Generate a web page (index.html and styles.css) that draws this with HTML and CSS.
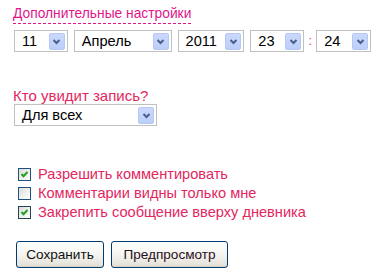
FILE: index.html
```html
<!DOCTYPE html>
<html lang="ru">
<head>
<meta charset="utf-8">
<link rel="stylesheet" href="styles.css">
</head>
<body>
<div class="page">
  <div class="heading-wrap"><span class="heading">Дополнительные настройки</span></div>

  <div class="date-row">
    <div class="select w-day"><span class="val">11</span><span class="arrow"><svg width="15" height="17" viewBox="0 0 15 17"><polyline points="4.5,7 7.5,10 10.5,7" fill="none" stroke="#4a5f8a" stroke-width="2"/></svg></span></div>
    <div class="select w-month"><span class="val">Апрель</span><span class="arrow"><svg width="15" height="17" viewBox="0 0 15 17"><polyline points="4.5,7 7.5,10 10.5,7" fill="none" stroke="#4a5f8a" stroke-width="2"/></svg></span></div>
    <div class="select w-year"><span class="val">2011</span><span class="arrow"><svg width="15" height="17" viewBox="0 0 15 17"><polyline points="4.5,7 7.5,10 10.5,7" fill="none" stroke="#4a5f8a" stroke-width="2"/></svg></span></div>
    <div class="select w-hour"><span class="val">23</span><span class="arrow"><svg width="15" height="17" viewBox="0 0 15 17"><polyline points="4.5,7 7.5,10 10.5,7" fill="none" stroke="#4a5f8a" stroke-width="2"/></svg></span></div>
    <span class="colon">:</span>
    <div class="select w-min"><span class="val">24</span><span class="arrow"><svg width="15" height="17" viewBox="0 0 15 17"><polyline points="4.5,7 7.5,10 10.5,7" fill="none" stroke="#4a5f8a" stroke-width="2"/></svg></span></div>
  </div>

  <div class="label-q">Кто увидит запись?</div>
  <div class="select w-who"><span class="val">Для всех</span><span class="arrow"><svg width="15" height="17" viewBox="0 0 15 17"><polyline points="4.5,7 7.5,10 10.5,7" fill="none" stroke="#4a5f8a" stroke-width="2"/></svg></span></div>

  <div class="checks">
    <div class="check-row"><span class="cb"><svg width="11" height="11" viewBox="0 0 11 11"><polyline points="2.5,5 4.5,7.2 8.5,3" fill="none" stroke="#21a121" stroke-width="2"/></svg></span><span class="cb-label">Разрешить комментировать</span></div>
    <div class="check-row"><span class="cb"></span><span class="cb-label">Комментарии видны только мне</span></div>
    <div class="check-row"><span class="cb cb-focus"><svg width="11" height="11" viewBox="0 0 11 11"><polyline points="2.5,5 4.5,7.2 8.5,3" fill="none" stroke="#21a121" stroke-width="2"/></svg></span><span class="cb-label">Закрепить сообщение вверху дневника</span></div>
  </div>

  <div class="buttons">
    <button class="btn btn-save">Сохранить</button>
    <button class="btn btn-preview">Предпросмотр</button>
  </div>
</div>
</body>
</html>
```

FILE: styles.css
```css
html, body {
  margin: 0;
  padding: 0;
  background: #ffffff;
}

.page {
  padding: 4px 0 0 13px;
  font-family: "Liberation Sans", Arial, sans-serif;
}

.heading-wrap {
  height: 19px;
}

.heading {
  display: inline-block;
  font-size: 13.8px;
  line-height: 16px;
  color: #e0168a;
  padding-bottom: 2px;
  background-image: linear-gradient(to right, #e0168a 60%, transparent 60%);
  background-size: 5px 1px;
  background-repeat: repeat-x;
  background-position: left bottom;
}

.date-row {
  display: flex;
  align-items: center;
  gap: 6px;
  margin-top: 7px;
  margin-left: 1px;
}

.select {
  box-sizing: border-box;
  height: 22px;
  border: 1px solid #c0c0c0;
  background: #ffffff;
  display: flex;
  align-items: center;
  font-size: 14.6px;
  color: #000;
}

.select .val {
  flex: 1;
  padding-left: 7px;
  line-height: 18px;
  white-space: nowrap;
}

.select .arrow {
  box-sizing: border-box;
  width: 16px;
  height: 17px;
  margin-right: 2px;
  background: linear-gradient(#cad9fd, #bccff9);
  border: 1px solid #b4c8f3;
  border-radius: 2px;
  display: flex;
  align-items: center;
  justify-content: center;
}

.select .arrow svg {
  display: block;
  margin: -1px;
}

.w-day { width: 54px; }
.w-month { width: 98px; }
.w-year { width: 67px; }
.w-hour { width: 54px; }
.w-min { width: 55px; }
.w-who { width: 143px; margin-left: 1px; }

.colon {
  width: 8px;
  margin: 0 -4px;
  text-align: center;
  color: #e0168a;
  font-size: 12px;
}

.label-q {
  margin-top: 36px;
  font-size: 15px;
  line-height: 16px;
  color: #e42660;
}

.checks {
  margin-top: 39px;
  padding-left: 5px;
}

.check-row {
  display: flex;
  align-items: center;
  height: 19px;
}

.cb {
  box-sizing: border-box;
  width: 13px;
  height: 13px;
  border: 1px solid #1c5180;
  background: linear-gradient(135deg, #dcdcd7 0%, #f2f2ef 60%, #ffffff 100%);
  margin-right: 7px;
  flex: none;
  position: relative;
}

.cb svg {
  display: block;
}

.cb-focus {
  outline: 1px dotted #333;
  outline-offset: -1px;
}

.cb-label {
  font-size: 14.6px;
  line-height: 19px;
  color: #e42660;
}

.buttons {
  display: flex;
  gap: 7px;
  margin-top: 19px;
  margin-left: 3px;
}

.btn {
  box-sizing: border-box;
  height: 27px;
  border: 1px solid #003c74;
  border-radius: 3px;
  background: linear-gradient(#ffffff 0%, #f4f4f0 50%, #e6e3da 90%, #d6d0c5 100%);
  font-family: "Liberation Sans", Arial, sans-serif;
  font-size: 13.6px;
  color: #111;
  padding: 0;
}

.btn-save { width: 88px; }
.btn-preview { width: 117px; color: #2a0f22; }
```
